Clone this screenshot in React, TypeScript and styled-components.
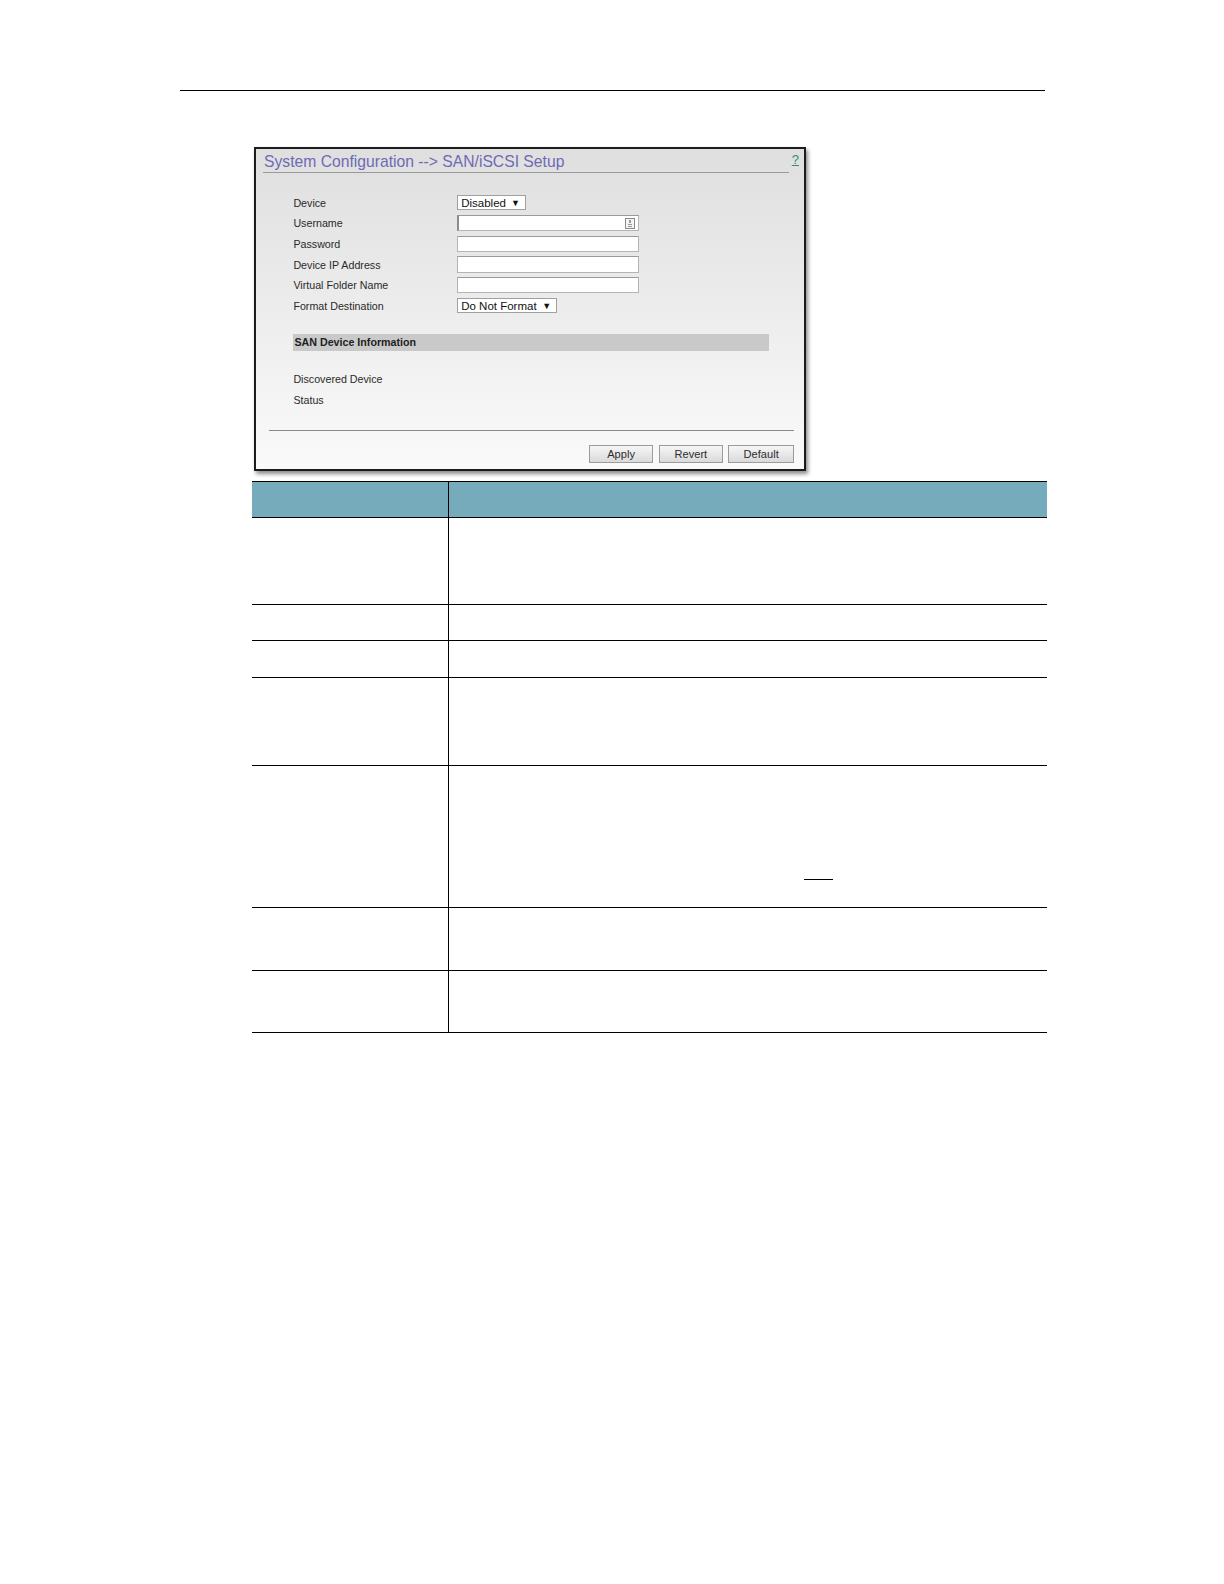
import React from 'react';
import styled, { createGlobalStyle } from 'styled-components';

const Global = createGlobalStyle`
  html, body { margin: 0; padding: 0; background: #fff; }
  body { font-family: "Liberation Sans", Arial, sans-serif; }
`;

const Page = styled.div`
  width: 100%;
  padding: 90px 0 40px;
  box-sizing: border-box;
`;

const TopRule = styled.div`
  margin-left: 180px;
  width: 865px;
  border-top: 1.5px solid #000;
`;

const Shot = styled.div`
  margin: 56px 0 0 254px;
  width: 552px;
  height: 324px;
  box-sizing: border-box;
  border: 2px solid #1c1c1c;
  box-shadow: 2px 3px 4px rgba(0, 0, 0, 0.45);
  background: linear-gradient(#dfdfdf, #fafafa);
  display: flex;
  flex-direction: column;
`;

const Header = styled.div`
  display: flex;
  align-items: flex-start;
  gap: 3px;
  padding: 3px 5px 0 7px;
`;

const Title = styled.div`
  flex: 1;
  font-size: 15.7px;
  line-height: 20.2px;
  color: #6e6ab4;
  padding-left: 1px;
  border-bottom: 1px solid #9a9a9a;
`;

const Help = styled.span`
  font-size: 13px;
  line-height: 15px;
  color: #2f8f72;
  text-decoration: underline;
`;

const Form = styled.div`
  margin: 19.2px 0 0 37.4px;
  display: grid;
  grid-template-columns: 163.8px auto;
  grid-auto-rows: 20.63px;
  align-items: center;
`;

const Label = styled.div`
  font-size: 10.7px;
  color: #2a2a2a;
`;

const Select = styled.div<{ $w: number }>`
  width: ${p => p.$w}px;
  height: 15.2px;
  box-sizing: border-box;
  background: #fff;
  border: 1px solid #a0a0a0;
  display: flex;
  align-items: center;
  justify-content: space-between;
  padding: 0 5px 0 3px;
  font-size: 11.5px;
  color: #111;
`;

const Arrow = styled.span`
  font-size: 9px;
  color: #111;
`;

const Input = styled.div`
  width: 182px;
  height: 16.2px;
  box-sizing: border-box;
  background: #fff;
  border: 1px solid #b4b4b4;
  border-top-color: #9a9a9a;
  display: flex;
  align-items: center;
  justify-content: flex-end;
  padding-right: 3px;
`;

const Focused = styled(Input)`
  border-left: 2px solid #8c8c8c;
`;

const KeyIcon = () => (
  <svg width="10" height="11" viewBox="0 0 10 11">
    <rect x="0.5" y="0.5" width="9" height="10" fill="#f4f4f4" stroke="#8a8a8a" />
    <rect x="4" y="2" width="2" height="3" fill="#999" />
    <rect x="3" y="6" width="4" height="1" fill="#999" />
    <rect x="3" y="8" width="4" height="1" fill="#999" />
  </svg>
);

const SectionBar = styled.div`
  margin: 18.2px 0 0 37.4px;
  width: 476px;
  height: 16.2px;
  background: #c9c9c9;
  font-size: 10.7px;
  font-weight: bold;
  line-height: 16.2px;
  color: #1e1e1e;
  padding-left: 1px;
  box-sizing: border-box;
`;

const Info = styled.div`
  margin: 18.2px 0 0 37.4px;
  display: grid;
  grid-auto-rows: 21.2px;
  align-items: center;
`;

const Divider = styled.div`
  margin: 19.2px 10px 0 13px;
  border-top: 1px solid #8a8a8a;
`;

const Buttons = styled.div`
  margin-top: 14.2px;
  padding-right: 10px;
  display: flex;
  justify-content: flex-end;
  gap: 5.6px;
`;

const Button = styled.div<{ $w: number }>`
  width: ${p => p.$w}px;
  height: 17.2px;
  box-sizing: border-box;
  border: 1px solid #9c9c9c;
  background: linear-gradient(#f6f6f6, #dadada);
  font-size: 11.1px;
  color: #2c2c2c;
  display: flex;
  align-items: center;
  justify-content: center;
`;

const Table = styled.div`
  margin: 10.1px 0 0 251.8px;
  width: 795px;
`;

const Row = styled.div<{ $h: number; $head?: boolean }>`
  display: grid;
  grid-template-columns: 197.2px 1fr;
  height: ${p => p.$h}px;
  box-sizing: border-box;
  border-bottom: 1.5px solid #000;
  ${p => (p.$head ? 'border-top: 1.5px solid #000; background: #76abbc;' : '')}
`;

const KeyCell = styled.div`
  border-right: 1.5px solid #000;
`;

const DescCell = styled.div``;

const Underline = styled.span`
  display: inline-block;
  margin: 113px 0 0 355px;
  width: 29.3px;
  border-bottom: 1.5px solid #000;
`;

const rows = [87, 36.4, 36.4, 88, 142.6, 62.7, 61.7];

export default function App() {
  return (
    <Page>
      <Global />
      <TopRule />
      <Shot>
        <Header>
          <Title>System Configuration --&gt; SAN/iSCSI Setup</Title>
          <Help>?</Help>
        </Header>
        <Form>
          <Label>Device</Label>
          <Select $w={68.8}>Disabled<Arrow>▼</Arrow></Select>
          <Label>Username</Label>
          <Focused><KeyIcon /></Focused>
          <Label>Password</Label>
          <Input />
          <Label>Device IP Address</Label>
          <Input />
          <Label>Virtual Folder Name</Label>
          <Input />
          <Label>Format Destination</Label>
          <Select $w={100}>Do Not Format<Arrow>▼</Arrow></Select>
        </Form>
        <SectionBar>SAN Device Information</SectionBar>
        <Info>
          <Label>Discovered Device</Label>
          <Label>Status</Label>
        </Info>
        <Divider />
        <Buttons>
          <Button $w={64.7}>Apply</Button>
          <Button $w={63.7}>Revert</Button>
          <Button $w={65.7}>Default</Button>
        </Buttons>
      </Shot>
      <Table>
        <Row $h={36.9} $head>
          <KeyCell />
          <DescCell />
        </Row>
        {rows.map((h, i) => (
          <Row key={i} $h={h}>
            <KeyCell />
            <DescCell>{i === 4 ? <Underline /> : null}</DescCell>
          </Row>
        ))}
      </Table>
    </Page>
  );
}
